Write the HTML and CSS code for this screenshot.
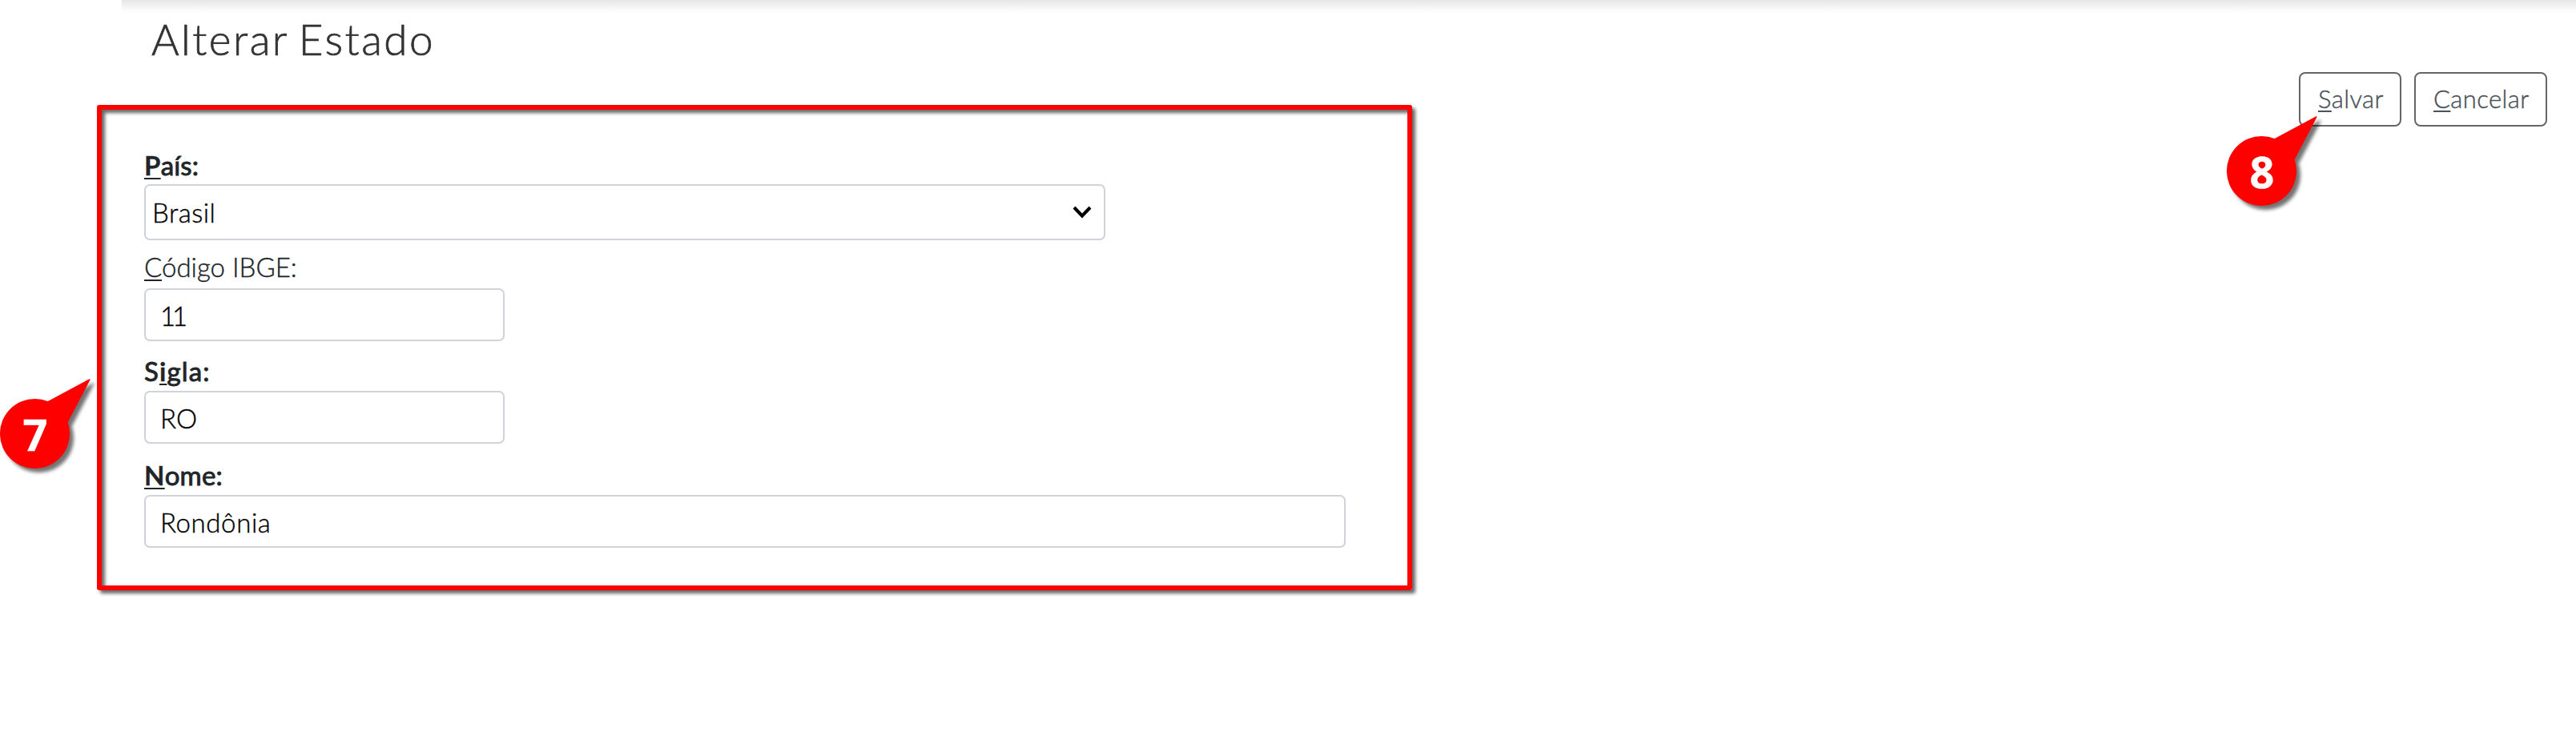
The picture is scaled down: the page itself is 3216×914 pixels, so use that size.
FILE: index.html
```html
<!DOCTYPE html>
<html lang="pt-BR">
<head>
<meta charset="utf-8">
<title>Alterar Estado</title>
<link rel="stylesheet" href="styles.css">
</head>
<body>
<div class="topbar-shadow"></div>
<h1 class="title"><span>Alterar Estado</span></h1>
<main class="main">
  <form class="panel">
    <div class="label strong pais"><span><u>P</u>aís:</span></div>
    <div class="control select"><span class="t-brasil">Brasil</span>
      <svg class="chevron" width="26" height="18" viewBox="0 0 26 18"><path d="M3 3L13 13.500L23 3" fill="none" stroke="#000" stroke-width="4"/></svg>
    </div>
    <div class="label ibge"><span><u>C</u>ódigo IBGE:</span></div>
    <div class="control short"><span class="t-11">11</span></div>
    <div class="label strong sigla"><span>S<u>i</u>gla:</span></div>
    <div class="control short"><span class="t-ro">RO</span></div>
    <div class="label strong nome"><span><u>N</u>ome:</span></div>
    <div class="control long"><span class="t-nome">Rondônia</span></div>
  </form>
  <div class="actions">
    <div class="button save"><span><u>S</u>alvar</span></div>
    <div class="button cancel"><span><u>C</u>ancelar</span></div>
  </div>
</main>
<div class="callout seven">
  <svg width="125" height="125" viewBox="0 0 125 125"><circle cx="43.5" cy="69.5" r="43.6"/><path d="M43 38L111 1.4Q113 .8 112.4 2.6L77 70Z"/></svg>
  <b>7</b>
</div>
<div class="callout eight">
  <svg width="125" height="125" viewBox="0 0 125 125"><circle cx="43.5" cy="69.5" r="43.6"/><path d="M43 38L111 1.4Q113 .8 112.4 2.6L77 70Z"/></svg>
  <b>8</b>
</div>
</body>
</html>
```
FILE: styles.css
```css
* { box-sizing: border-box; }
body {
  margin: 0;
  width: 3216px;
  height: 914px;
  overflow: hidden;
  position: relative;
  background: #fff;
  color: #212529;
  font-family: Lato, "Open Sans", sans-serif;
  font-weight: 300;
  -webkit-text-stroke: .4px currentColor;
}
u {
  text-decoration-thickness: 2px;
  text-underline-offset: 3px;
  text-decoration-skip-ink: none;
}
.topbar-shadow {
  height: 17px;
  margin-left: 152px;
  background: linear-gradient(#e6e6e6, #f0f0f0 35%, #fbfbfb 75%, #fff);
}
.title {
  margin: 0;
  padding-left: 189px;
  height: 73px;
  font-size: 53px;
  line-height: 63px;
  font-weight: 300;
  color: #333;
  -webkit-text-stroke: .7px currentColor;
}
.title span { letter-spacing: 2.5px; word-spacing: -4px; }
.main {
  display: flex;
  justify-content: space-between;
  align-items: flex-start;
  padding-right: 36px;
}
.panel {
  margin: 41px 0 0 120.7px;
  width: 1642px;
  height: 606px;
  padding: 54px 0 0 53.3px;
  border: 6px solid #f00;
  border-radius: 3px;
  box-shadow: 4px 4px 4px rgba(0, 0, 0, .6), inset 4px 4px 4px rgba(0, 0, 0, .6);
}
.label {
  height: 62px;
  padding-top: 17px;
  font-size: 33px;
  line-height: 40px;
  white-space: nowrap;
}
.label.pais { height: 39px; padding-top: 0; line-height: 30px; }
.label.ibge { height: 60px; padding-top: 13px; }
.label.nome { height: 64px; padding-top: 19px; }
.strong { font-weight: 400; -webkit-text-stroke: .9px currentColor; }
.strong span { letter-spacing: .2px; }
.strong.sigla span { letter-spacing: 1.1px; }
.strong u { font-weight: 700; -webkit-text-stroke: .3px currentColor; }
.control {
  height: 66px;
  padding: 0 18px;
  border: 2px solid #ced4da;
  border-radius: 7px;
  font-size: 33px;
  line-height: 65px;
  color: #000;
  white-space: nowrap;
}
.select {
  width: 1200px;
  height: 70px;
  padding: 0 14px 0 8px;
  display: flex;
  align-items: center;
  justify-content: space-between;
}
.t-brasil { letter-spacing: .5px; }
.t-11 { letter-spacing: -4px; }
.t-nome { letter-spacing: .6px; }
.short { width: 450px; }
.long { width: 1500px; }
.actions { display: flex; gap: 16px; }
.button {
  height: 68px;
  border: 2px solid #666;
  border-radius: 8px;
  padding-left: 22px;
  font-size: 31px;
  line-height: 62px;
  color: #495057;
  letter-spacing: .4px;
  white-space: nowrap;
}
.save { width: 128px; }
.cancel { width: 166px; }
.callout {
  position: absolute;
  width: 125px;
  height: 125px;
  color: #fff;
}
.callout svg {
  display: block;
  fill: #f00;
  overflow: visible;
  filter: drop-shadow(5px 5px 2px rgba(0, 0, 0, .55));
}
.callout b {
  position: absolute;
  left: 0;
  top: 33px;
  width: 88px;
  text-align: center;
  font: 700 54px/74px "Open Sans", sans-serif;
}
.seven { left: 0; top: 472px; }
.eight { left: 2780px; top: 144px; }
```
